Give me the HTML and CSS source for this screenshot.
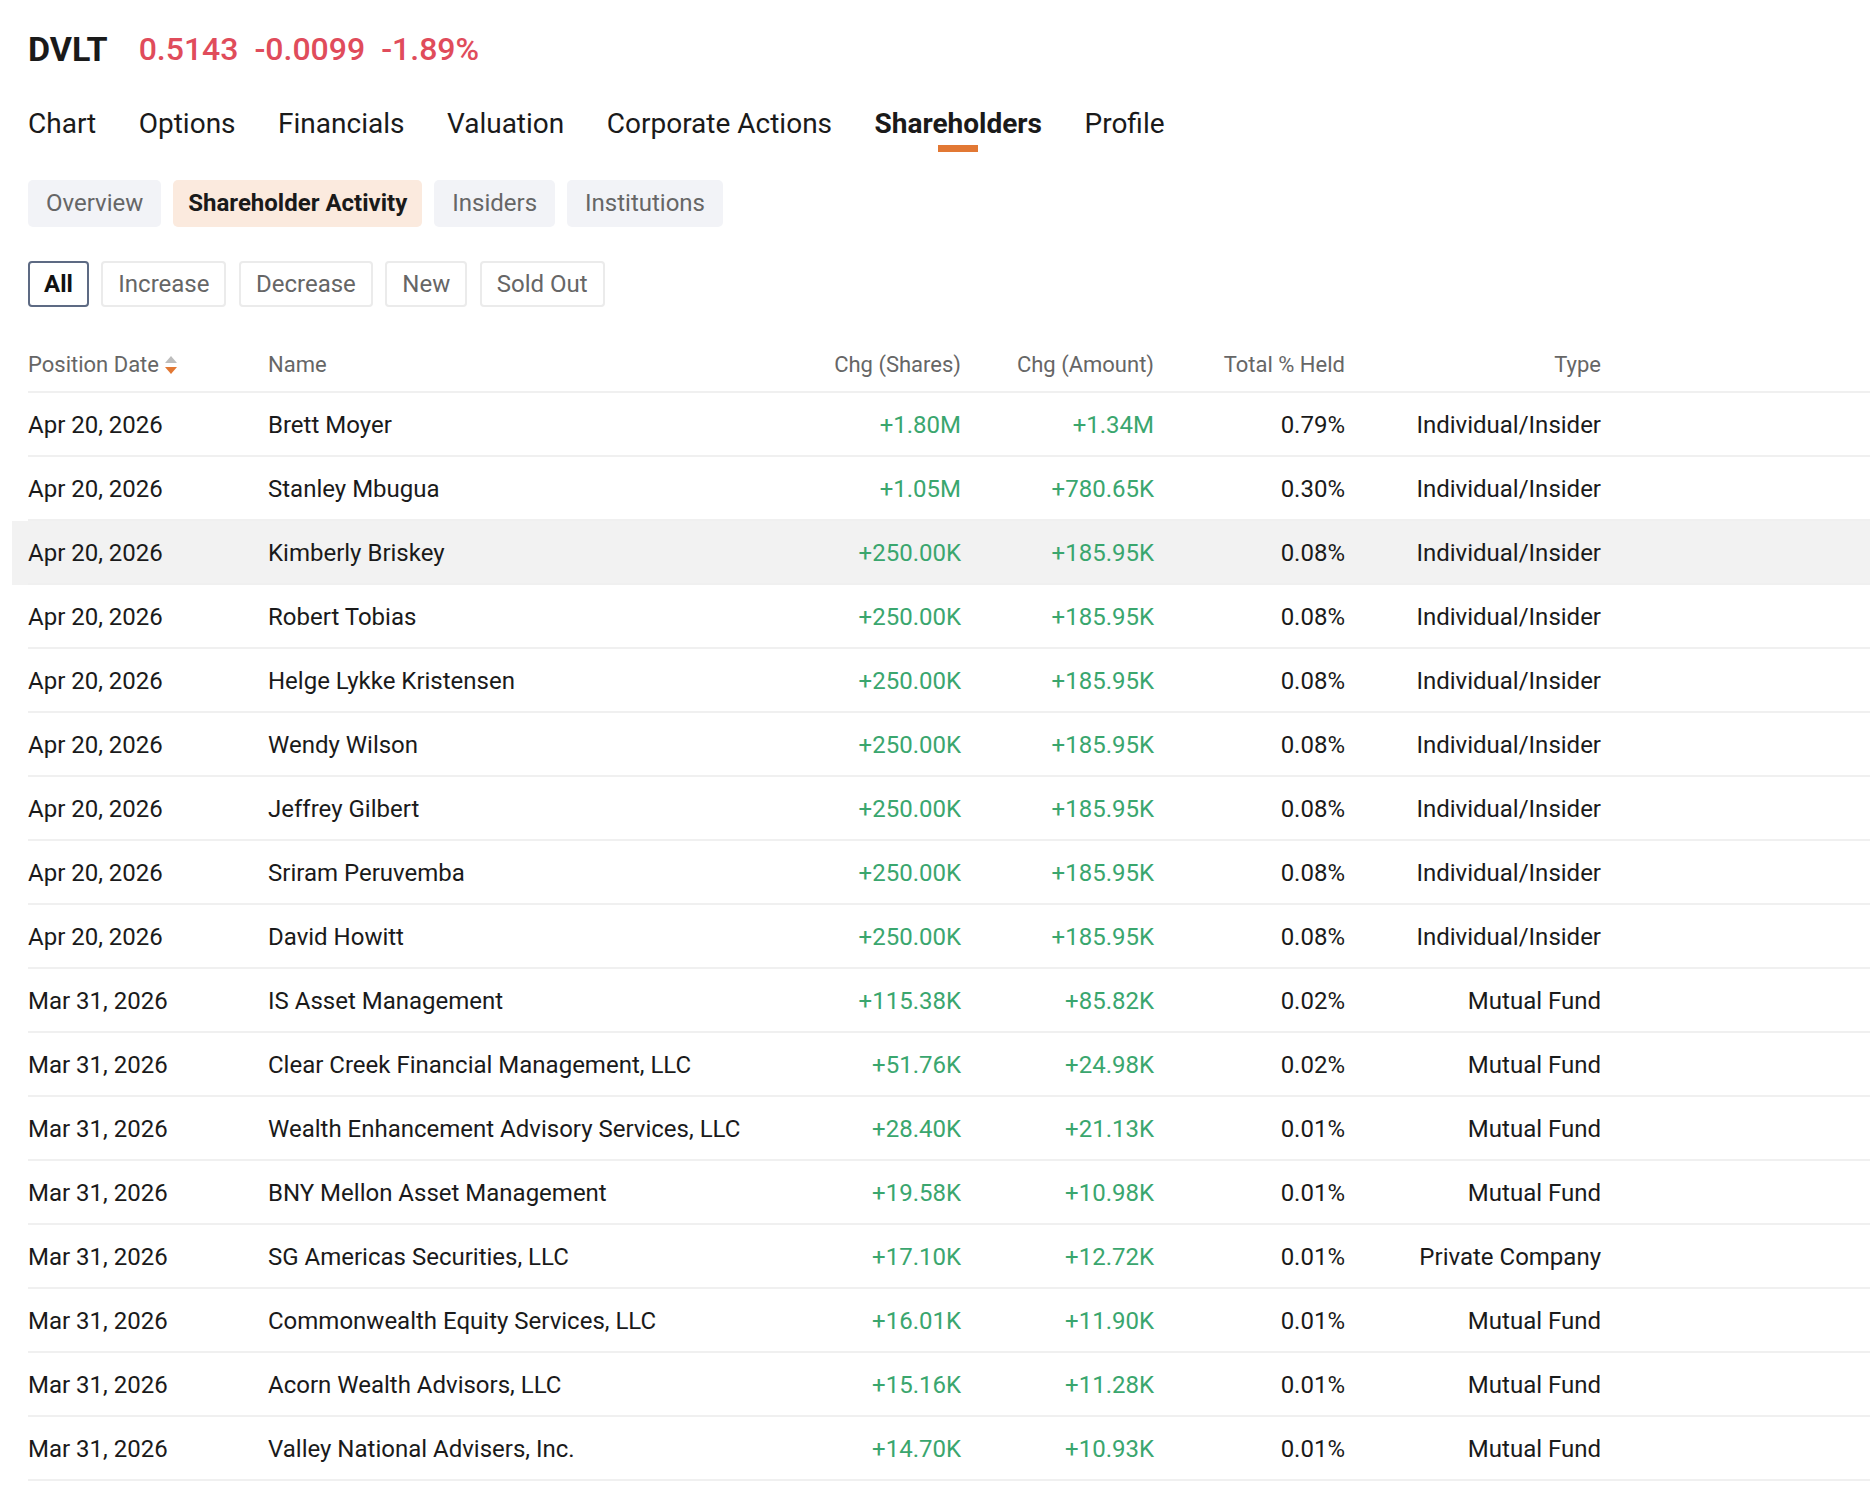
FILE: index.html
```html
<!DOCTYPE html>
<html lang="en">
<head>
    <meta charset="UTF-8">
    <meta name="viewport" content="width=device-width, initial-scale=1.0">
    <title>DVLT Shareholders</title>
    <link rel="stylesheet" href="styles.css">
</head>
<body>
    <div class="page">
        <div class="quote">
            <span class="symbol">DVLT</span>
            <span class="price">0.5143</span>
            <span class="price">-0.0099</span>
            <span class="price">-1.89%</span>
        </div>

        <nav class="tabs">
            <a href="#">Chart</a>
            <a href="#">Options</a>
            <a href="#">Financials</a>
            <a href="#">Valuation</a>
            <a href="#">Corporate Actions</a>
            <a href="#" class="active">Shareholders</a>
            <a href="#">Profile</a>
        </nav>

        <div class="subtabs">
            <a href="#">Overview</a>
            <a href="#" class="active">Shareholder Activity</a>
            <a href="#">Insiders</a>
            <a href="#">Institutions</a>
        </div>

        <div class="filters">
            <button class="active">All</button>
            <button>Increase</button>
            <button>Decrease</button>
            <button>New</button>
            <button>Sold Out</button>
        </div>

        <table class="activity">
            <colgroup>
                <col class="col-date">
                <col class="col-name">
                <col class="col-shares">
                <col class="col-amount">
                <col class="col-held">
                <col class="col-type">
                <col>
            </colgroup>
            <thead>
                <tr>
                    <th>Position Date<svg class="sort" width="12" height="18" viewBox="0 0 12 18"><path d="M6 0L12 7H0Z" fill="#bdbdbd"/><path d="M0 11H12L6 18Z" fill="#e27834"/></svg></th>
                    <th>Name</th>
                    <th class="num">Chg (Shares)</th>
                    <th class="num">Chg (Amount)</th>
                    <th class="num">Total % Held</th>
                    <th class="num">Type</th>
                    <th></th>
                </tr>
            </thead>
            <tbody>
                <tr>
                    <td>Apr 20, 2026</td>
                    <td>Brett Moyer</td>
                    <td class="num up">+1.80M</td>
                    <td class="num up">+1.34M</td>
                    <td class="num">0.79%</td>
                    <td class="num">Individual/Insider</td>
                    <td></td>
                </tr>
                <tr>
                    <td>Apr 20, 2026</td>
                    <td>Stanley Mbugua</td>
                    <td class="num up">+1.05M</td>
                    <td class="num up">+780.65K</td>
                    <td class="num">0.30%</td>
                    <td class="num">Individual/Insider</td>
                    <td></td>
                </tr>
                <tr class="hover">
                    <td>Apr 20, 2026</td>
                    <td>Kimberly Briskey</td>
                    <td class="num up">+250.00K</td>
                    <td class="num up">+185.95K</td>
                    <td class="num">0.08%</td>
                    <td class="num">Individual/Insider</td>
                    <td></td>
                </tr>
                <tr>
                    <td>Apr 20, 2026</td>
                    <td>Robert Tobias</td>
                    <td class="num up">+250.00K</td>
                    <td class="num up">+185.95K</td>
                    <td class="num">0.08%</td>
                    <td class="num">Individual/Insider</td>
                    <td></td>
                </tr>
                <tr>
                    <td>Apr 20, 2026</td>
                    <td>Helge Lykke Kristensen</td>
                    <td class="num up">+250.00K</td>
                    <td class="num up">+185.95K</td>
                    <td class="num">0.08%</td>
                    <td class="num">Individual/Insider</td>
                    <td></td>
                </tr>
                <tr>
                    <td>Apr 20, 2026</td>
                    <td>Wendy Wilson</td>
                    <td class="num up">+250.00K</td>
                    <td class="num up">+185.95K</td>
                    <td class="num">0.08%</td>
                    <td class="num">Individual/Insider</td>
                    <td></td>
                </tr>
                <tr>
                    <td>Apr 20, 2026</td>
                    <td>Jeffrey Gilbert</td>
                    <td class="num up">+250.00K</td>
                    <td class="num up">+185.95K</td>
                    <td class="num">0.08%</td>
                    <td class="num">Individual/Insider</td>
                    <td></td>
                </tr>
                <tr>
                    <td>Apr 20, 2026</td>
                    <td>Sriram Peruvemba</td>
                    <td class="num up">+250.00K</td>
                    <td class="num up">+185.95K</td>
                    <td class="num">0.08%</td>
                    <td class="num">Individual/Insider</td>
                    <td></td>
                </tr>
                <tr>
                    <td>Apr 20, 2026</td>
                    <td>David Howitt</td>
                    <td class="num up">+250.00K</td>
                    <td class="num up">+185.95K</td>
                    <td class="num">0.08%</td>
                    <td class="num">Individual/Insider</td>
                    <td></td>
                </tr>
                <tr>
                    <td>Mar 31, 2026</td>
                    <td>IS Asset Management</td>
                    <td class="num up">+115.38K</td>
                    <td class="num up">+85.82K</td>
                    <td class="num">0.02%</td>
                    <td class="num">Mutual Fund</td>
                    <td></td>
                </tr>
                <tr>
                    <td>Mar 31, 2026</td>
                    <td>Clear Creek Financial Management, LLC</td>
                    <td class="num up">+51.76K</td>
                    <td class="num up">+24.98K</td>
                    <td class="num">0.02%</td>
                    <td class="num">Mutual Fund</td>
                    <td></td>
                </tr>
                <tr>
                    <td>Mar 31, 2026</td>
                    <td>Wealth Enhancement Advisory Services, LLC</td>
                    <td class="num up">+28.40K</td>
                    <td class="num up">+21.13K</td>
                    <td class="num">0.01%</td>
                    <td class="num">Mutual Fund</td>
                    <td></td>
                </tr>
                <tr>
                    <td>Mar 31, 2026</td>
                    <td>BNY Mellon Asset Management</td>
                    <td class="num up">+19.58K</td>
                    <td class="num up">+10.98K</td>
                    <td class="num">0.01%</td>
                    <td class="num">Mutual Fund</td>
                    <td></td>
                </tr>
                <tr>
                    <td>Mar 31, 2026</td>
                    <td>SG Americas Securities, LLC</td>
                    <td class="num up">+17.10K</td>
                    <td class="num up">+12.72K</td>
                    <td class="num">0.01%</td>
                    <td class="num">Private Company</td>
                    <td></td>
                </tr>
                <tr>
                    <td>Mar 31, 2026</td>
                    <td>Commonwealth Equity Services, LLC</td>
                    <td class="num up">+16.01K</td>
                    <td class="num up">+11.90K</td>
                    <td class="num">0.01%</td>
                    <td class="num">Mutual Fund</td>
                    <td></td>
                </tr>
                <tr>
                    <td>Mar 31, 2026</td>
                    <td>Acorn Wealth Advisors, LLC</td>
                    <td class="num up">+15.16K</td>
                    <td class="num up">+11.28K</td>
                    <td class="num">0.01%</td>
                    <td class="num">Mutual Fund</td>
                    <td></td>
                </tr>
                <tr>
                    <td>Mar 31, 2026</td>
                    <td>Valley National Advisers, Inc.</td>
                    <td class="num up">+14.70K</td>
                    <td class="num up">+10.93K</td>
                    <td class="num">0.01%</td>
                    <td class="num">Mutual Fund</td>
                    <td></td>
                </tr>
            </tbody>
        </table>
    </div>
</body>
</html>
```

FILE: styles.css
```css
body {
    margin: 0;
    font-family: Roboto, "Noto Sans", Arial, sans-serif;
    color: #1a1a1a;
    background-color: #fff;
}

.page {
    padding: 29px 0 0 28px;
}

/* ticker line */
.quote {
    display: flex;
    align-items: center;
    height: 40px;
    line-height: 40px;
    font-size: 32px;
}

.quote .symbol {
    font-size: 34px;
    font-weight: 700;
    margin-right: 31px;
}

.quote .price {
    font-weight: 500;
    color: #e04c5b;
    margin-right: 16px;
}

/* main tabs */
.tabs {
    display: flex;
    gap: 42.5px;
    margin-top: 37px;
}

.tabs a {
    position: relative;
    font-size: 28px;
    line-height: 36px;
    padding-bottom: 10px;
    color: #1a1a1a;
    text-decoration: none;
}

.tabs a.active {
    font-weight: 700;
}

.tabs a.active::after {
    content: "";
    position: absolute;
    left: 50%;
    top: 39px;
    width: 40px;
    height: 7px;
    margin-left: -20px;
    background-color: #e27834;
}

/* sub tabs */
.subtabs {
    display: flex;
    gap: 12px;
    margin-top: 28px;
}

.subtabs a {
    height: 47px;
    line-height: 47px;
    padding: 0 18px;
    font-size: 24px;
    color: #666;
    background-color: #f2f3f7;
    border-radius: 5px;
    text-decoration: none;
}

.subtabs a.active {
    padding: 0 15px;
    color: #1a1a1a;
    font-weight: 700;
    background-color: #fbeade;
}

/* filter buttons */
.filters {
    display: flex;
    gap: 12.5px;
    margin-top: 34px;
}

.filters button {
    height: 46px;
    padding: 0 15px;
    font-family: inherit;
    font-size: 24px;
    line-height: 42px;
    color: #666;
    background-color: #fff;
    border: 2px solid #ebebeb;
    border-radius: 4px;
}

.filters button.active {
    padding: 0 14px;
    color: #111;
    font-weight: 700;
    border-color: #5d6a83;
}

/* table */
.activity {
    width: 100%;
    margin-top: 33px;
    border-collapse: separate;
    border-spacing: 0;
    table-layout: fixed;
}

.col-date { width: 240px; }
.col-name { width: 513px; }
.col-shares { width: 180px; }
.col-amount { width: 193px; }
.col-held { width: 191px; }
.col-type { width: 256px; }

.activity th {
    padding: 0 0 1px;
    font-size: 22px;
    font-weight: 400;
    line-height: 50px;
    color: #666;
    text-align: left;
    white-space: nowrap;
    border-bottom: 2px solid #f0f0f0;
}

.activity td {
    padding: 3px 0 0;
    font-size: 24px;
    line-height: 59px;
    white-space: nowrap;
    border-bottom: 2px solid #f0f0f0;
}

.activity .num {
    text-align: right;
}

.activity .up {
    color: #3aa66e;
}

.activity tr.hover td {
    background-color: #f2f2f2;
}

.activity tr.hover td:first-child {
    box-shadow: -16px 0 0 #f2f2f2;
}

.sort {
    margin-left: 6px;
    vertical-align: -2px;
}
```
